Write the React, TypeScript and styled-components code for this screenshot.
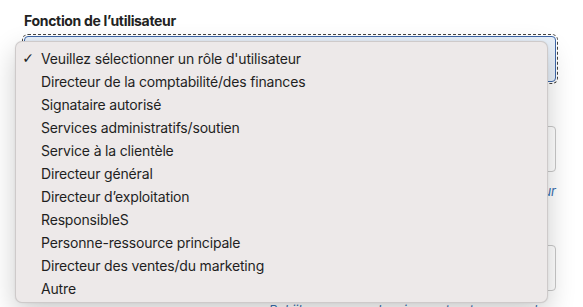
import React from "react";
import styled, { createGlobalStyle } from "styled-components";

const GlobalStyle = createGlobalStyle`
  html, body { margin: 0; padding: 0; background: #ffffff; }
  body { font-family: Inter, "Noto Sans", sans-serif; color: #222; }
`;

const Page = styled.div`
  position: relative;
  width: 583px;
  height: 307px;
  overflow: hidden;
  background: #ffffff;
`;

const Form = styled.div`
  display: flex;
  flex-direction: column;
  width: 532px;
  padding: 11px 0 0 24px;
`;

const Label = styled.div`
  font-size: 14px;
  font-weight: 700;
  line-height: 20px;
  color: #222;
  letter-spacing: -0.32px;
`;

const SelectBox = styled.div<{ $focused?: boolean }>`
  box-sizing: border-box;
  height: 46px;
  margin-top: 5px;
  border-radius: 4px;
  border: 1px solid ${(p) => (p.$focused ? "#3d67a8" : "#c9c9c9")};
  background: ${(p) => (p.$focused ? "#e9f1fa" : "#ffffff")};
  outline: ${(p) => (p.$focused ? "1px dashed #444" : "none")};
  outline-offset: 1px;
`;

const FieldGroup = styled.div<{ $gap: number }>`
  display: flex;
  flex-direction: column;
  margin-top: ${(p) => p.$gap}px;
`;

const HelpLink = styled.a`
  align-self: flex-end;
  margin-top: 10px;
  font-size: 13px;
  line-height: 18px;
  color: #3a6fb0;
  font-style: italic;
  text-decoration: none;
  white-space: nowrap;
`;

const Menu = styled.ul`
  position: absolute;
  left: 15px;
  top: 41px;
  width: 533px;
  height: 262px;
  box-sizing: border-box;
  margin: 0;
  padding: 5px 0 0 0;
  list-style: none;
  background: #ede9e9;
  border: 1px solid rgba(0, 0, 0, 0.13);
  border-radius: 7px;
  box-shadow: 0 10px 28px rgba(0, 0, 0, 0.2), 0 0 2px rgba(0, 0, 0, 0.08);
`;

const Item = styled.li`
  display: flex;
  align-items: center;
  height: 23px;
  font-size: 14px;
  line-height: 23px;
  color: #1f1f1f;
  letter-spacing: -0.17px;
`;

const Check = styled.span`
  display: inline-flex;
  justify-content: center;
  width: 20px;
  margin-left: 2px;
  margin-right: 3px;
  font-size: 14px;
  font-family: "DejaVu Sans", sans-serif;
  color: #222;
`;

const options = [
  "Veuillez sélectionner un rôle d'utilisateur",
  "Directeur de la comptabilité/des finances",
  "Signataire autorisé",
  "Services administratifs/soutien",
  "Service à la clientèle",
  "Directeur général",
  "Directeur d’exploitation",
  "ResponsibleS",
  "Personne-ressource principale",
  "Directeur des ventes/du marketing",
  "Autre",
];

export default function App() {
  return (
    <Page>
      <GlobalStyle />
      <Form>
        <Label>Fonction de l’utilisateur</Label>
        <SelectBox $focused />
        <FieldGroup $gap={39}>
          <SelectBox />
          <HelpLink>Où trouver mon numéro de fournisseur</HelpLink>
        </FieldGroup>
        <FieldGroup $gap={40}>
          <SelectBox />
          <HelpLink>Bekijken van regelgeving omtrent woonwerken</HelpLink>
        </FieldGroup>
      </Form>
      <Menu>
        {options.map((o, i) => (
          <Item key={o}>
            <Check>{i === 0 ? "✓" : ""}</Check>
            {o}
          </Item>
        ))}
      </Menu>
    </Page>
  );
}
